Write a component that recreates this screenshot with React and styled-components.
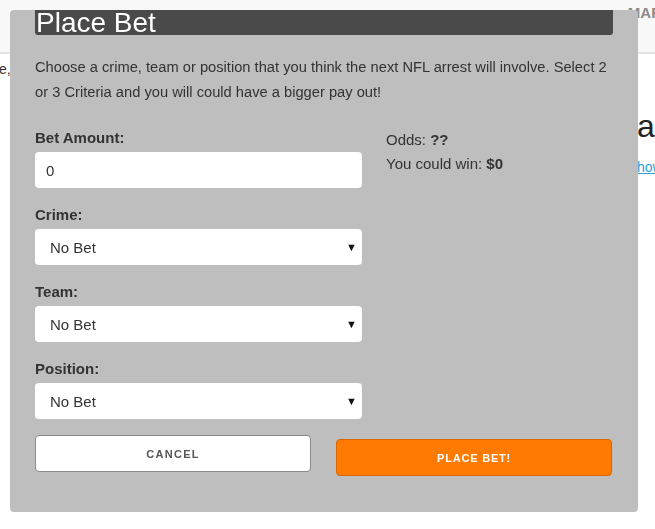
import React, { useState } from 'react';
import styled, { createGlobalStyle } from 'styled-components';

const GlobalStyle = createGlobalStyle`
    html, body {
        margin: 0;
        padding: 0;
        background: #fff;
        font-family: "Liberation Sans", Arial, sans-serif;
        color: #333;
        overflow: hidden;
    }
`;

const crimes = ['No Bet', 'DUI', 'Assault', 'Drug Possession', 'Weapons'];
const teams = ['No Bet', 'Bengals', 'Broncos', 'Vikings', 'Buccaneers'];
const positions = ['No Bet', 'WR', 'LB', 'RB', 'CB', 'DT'];

// Field with label and a select / input
const Field = ({ label, children }) => (
    <FieldGroup>
        <Label>{label}</Label>
        {children}
    </FieldGroup>
);

const SelectField = ({ label, options, value, onChange }) => (
    <Field label={label}>
        <SelectWrap>
            <Select value={value} onChange={(e) => onChange(e.target.value)}>
                {options.map((o) => (
                    <option key={o} value={o}>{o}</option>
                ))}
            </Select>
            <Arrow>▼</Arrow>
        </SelectWrap>
    </Field>
);

const App = () => {
    const [amount, setAmount] = useState('0');
    const [crime, setCrime] = useState('No Bet');
    const [team, setTeam] = useState('No Bet');
    const [position, setPosition] = useState('No Bet');

    return (
        <>
            <GlobalStyle />
            <Page>
                <Navbar>
                    <NavLink>MARKET</NavLink>
                </Navbar>
                <Content>
                    <SideText>e,</SideText>
                    <RightCol>
                        <BigHeading>a</BigHeading>
                        <Link href="#">how</Link>
                    </RightCol>
                </Content>
            </Page>

            <Modal>
                <TitleBar>Place Bet</TitleBar>
                <Intro>
                    Choose a crime, team or position that you think the next NFL arrest will involve. Select 2
                    or 3 Criteria and you will could have a bigger pay out!
                </Intro>

                <Columns>
                    <FormCol>
                        <Field label="Bet Amount:">
                            <Input value={amount} onChange={(e) => setAmount(e.target.value)} />
                        </Field>
                        <SelectField label="Crime:" options={crimes} value={crime} onChange={setCrime} />
                        <SelectField label="Team:" options={teams} value={team} onChange={setTeam} />
                        <SelectField label="Position:" options={positions} value={position} onChange={setPosition} />
                    </FormCol>
                    <OddsCol>
                        <OddsLine>Odds: <b>??</b></OddsLine>
                        <OddsLine>You could win: <b>${Number(amount) || 0}</b></OddsLine>
                    </OddsCol>
                </Columns>

                <Buttons>
                    <Button>CANCEL</Button>
                    <Button primary>PLACE BET!</Button>
                </Buttons>
            </Modal>
        </>
    );
};

// Background page
const Page = styled.div`
    width: 655px;
    height: 529px;
`;

const Navbar = styled.div`
    height: 52px;
    background: #f8f8f8;
    border-bottom: 2px solid #e2e2e2;
    display: flex;
    justify-content: flex-end;
    align-items: flex-start;
    overflow: hidden;
`;

const NavLink = styled.span`
    font-size: 15px;
    font-weight: bold;
    color: #8a8a8a;
    margin-top: 4px;
    margin-right: -37px;
`;

const Content = styled.div`
    display: flex;
    justify-content: space-between;
    overflow: hidden;
`;

const SideText = styled.span`
    font-size: 14px;
    color: #333;
    margin-top: 7px;
    margin-left: -1px;
`;

const RightCol = styled.div`
    display: flex;
    flex-direction: column;
    margin-right: -30px;
    width: 48px;
`;

const BigHeading = styled.h1`
    font-size: 32px;
    font-weight: normal;
    color: #222;
    margin: 52px 0 0;
    line-height: 40px;
`;

const Link = styled.a`
    font-size: 14px;
    color: #2a9fd6;
    margin-top: 13px;
`;

// Modal
const Modal = styled.div`
    position: fixed;
    top: 10px;
    left: 10px;
    width: 628px;
    height: 502px;
    box-sizing: border-box;
    padding: 0 25px;
    background: #bebebe;
    border-radius: 4px;
    display: flex;
    flex-direction: column;
`;

const TitleBar = styled.h2`
    margin: 0;
    height: 25px;
    line-height: 25px;
    background: #4a4a4a;
    color: #fff;
    font-size: 28px;
    font-weight: normal;
    padding-left: 1px;
    border-radius: 0 0 3px 3px;
    overflow: visible;
`;

const Intro = styled.p`
    margin: 20px 0 0;
    font-size: 14.7px;
    line-height: 25px;
    color: #333;
`;

const Columns = styled.div`
    display: grid;
    grid-template-columns: 327px 1fr;
    column-gap: 24px;
    margin-top: 23px;
`;

const FormCol = styled.div`
    display: flex;
    flex-direction: column;
    gap: 17px;
`;

const FieldGroup = styled.div`
    display: flex;
    flex-direction: column;
    gap: 4px;
`;

const Label = styled.label`
    font-size: 15px;
    font-weight: bold;
    line-height: 20px;
    color: #333;
`;

const Input = styled.input`
    height: 36px;
    box-sizing: border-box;
    border: none;
    border-radius: 4px;
    background: #fff;
    padding: 0 11px;
    font-family: inherit;
    font-size: 15px;
    color: #333;
    outline: none;
`;

const SelectWrap = styled.div`
    position: relative;
`;

const Select = styled.select`
    width: 100%;
    height: 36px;
    box-sizing: border-box;
    border: none;
    border-radius: 4px;
    background: #fff;
    padding: 0 15px;
    font-family: inherit;
    font-size: 15px;
    color: #333;
    appearance: none;
    outline: none;
`;

const Arrow = styled.span`
    position: absolute;
    right: 5px;
    top: 12px;
    font-size: 11px;
    line-height: 12px;
    color: #111;
    pointer-events: none;
`;

const OddsCol = styled.div`
    display: flex;
    flex-direction: column;
`;

const OddsLine = styled.div`
    font-size: 15px;
    line-height: 24px;
    color: #333;
`;

const Buttons = styled.div`
    display: grid;
    grid-template-columns: 276px 276px;
    column-gap: 25px;
    margin-top: 16px;
    align-items: start;
`;

const Button = styled.button`
    height: 37px;
    margin-top: ${(p) => (p.primary ? '4px' : '0')};
    border-radius: 4px;
    border: 1px solid ${(p) => (p.primary ? '#d96600' : '#8a8a8a')};
    background: ${(p) => (p.primary ? '#ff7a00' : '#fff')};
    color: ${(p) => (p.primary ? '#fff' : '#555')};
    font-family: inherit;
    font-size: 11px;
    font-weight: bold;
    letter-spacing: ${(p) => (p.primary ? '0.8px' : '1.3px')};
    cursor: pointer;
`;

export default App;
